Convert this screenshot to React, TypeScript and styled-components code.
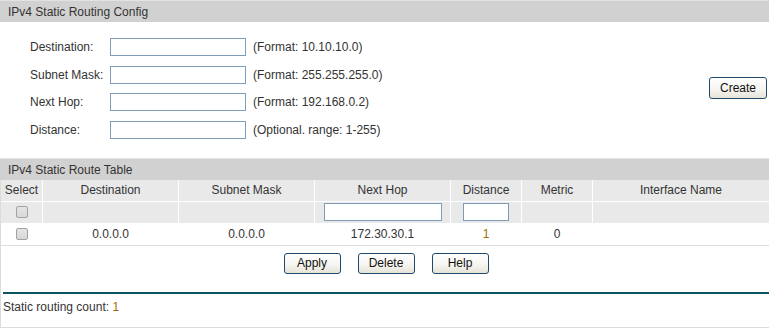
import styled, { createGlobalStyle } from "styled-components";

const GlobalStyle = createGlobalStyle`
  body {
    margin: 0;
    background: #fff;
    font-family: "Liberation Sans", Arial, sans-serif;
    font-size: 12px;
    color: #333;
  }
`;

const fields = [
  { label: "Destination:", hint: "(Format: 10.10.10.0)" },
  { label: "Subnet Mask:", hint: "(Format: 255.255.255.0)" },
  { label: "Next Hop:", hint: "(Format: 192.168.0.2)" },
  { label: "Distance:", hint: "(Optional. range: 1-255)" },
];

const columns = [
  "Select",
  "Destination",
  "Subnet Mask",
  "Next Hop",
  "Distance",
  "Metric",
  "Interface Name",
];

const routes = [
  {
    destination: "0.0.0.0",
    mask: "0.0.0.0",
    nextHop: "172.30.30.1",
    distance: "1",
    metric: "0",
    iface: "",
  },
];

const App = () => {
  return (
    <Page>
      <GlobalStyle />
      <SectionTitle>IPv4 Static Routing Config</SectionTitle>
      <ConfigBody>
        <FormGrid>
          {fields.map((f) => (
            <FormRow key={f.label}>
              <Label>{f.label}</Label>
              <TextInput type="text" $width={136} />
              <Hint>{f.hint}</Hint>
            </FormRow>
          ))}
        </FormGrid>
        <Button $width={58} $height={22}>
          Create
        </Button>
      </ConfigBody>

      <SectionTitle>IPv4 Static Route Table</SectionTitle>
      <TableBody>
        <Row $shade>
          {columns.map((c) => (
            <HeadCell key={c}>{c}</HeadCell>
          ))}
        </Row>
        <Row $shade>
          <Cell>
            <Check type="checkbox" />
          </Cell>
          <Cell />
          <Cell />
          <Cell>
            <TextInput type="text" $width={118} />
          </Cell>
          <Cell>
            <TextInput type="text" $width={46} />
          </Cell>
          <Cell />
          <Cell />
        </Row>
        {routes.map((r) => (
          <Row key={r.destination + r.nextHop} $line>
            <Cell>
              <Check type="checkbox" />
            </Cell>
            <Cell>{r.destination}</Cell>
            <Cell>{r.mask}</Cell>
            <Cell>{r.nextHop}</Cell>
            <Cell $accent>{r.distance}</Cell>
            <Cell>{r.metric}</Cell>
            <Cell>{r.iface}</Cell>
          </Row>
        ))}

        <ActionBar>
          <Button $width={57} $height={21}>Apply</Button>
          <Button $width={57} $height={21}>Delete</Button>
          <Button $width={57} $height={21}>Help</Button>
        </ActionBar>
        <Divider />
        <CountLine>
          Static routing count: <Accent>1</Accent>
        </CountLine>
      </TableBody>
    </Page>
  );
};

const Page = styled.div`
  width: 769px;
  height: 328px;
  box-sizing: border-box;
  display: flex;
  flex-direction: column;
`;

const SectionTitle = styled.div`
  height: 21px;
  line-height: 22px;
  border-top: 1px solid #e2e2e2;
  background: #d1d1d1;
  padding-left: 8px;
  color: #333;
`;

const ConfigBody = styled.div`
  display: flex;
  align-items: center;
  justify-content: space-between;
  padding: 16px 2px 19px 30px;
`;

const FormGrid = styled.div`
  display: flex;
  flex-direction: column;
  gap: 9.5px;
`;

const FormRow = styled.div`
  display: grid;
  grid-template-columns: 80px 136px auto;
  align-items: center;
  height: 18px;
`;

const Label = styled.span`
  color: #333;
`;

const Hint = styled.span`
  padding-left: 7px;
  color: #333;
`;

const TextInput = styled.input<{ $width: number }>`
  box-sizing: border-box;
  width: ${({ $width }) => $width}px;
  height: 18px;
  margin: 0;
  padding: 0 3px;
  border: 1px solid #7f9db9;
  background: #fff;
  font-family: inherit;
  font-size: 12px;
`;

const Button = styled.button<{ $width: number; $height: number }>`
  box-sizing: border-box;
  width: ${({ $width }) => $width}px;
  height: ${({ $height }) => $height}px;
  padding: 0;
  border: 1px solid #1f4a6e;
  border-radius: 3px;
  background: linear-gradient(#ffffff 0%, #f6f5f1 55%, #e6e3d8 100%);
  font-family: "Liberation Sans", Arial, sans-serif;
  font-size: 12px;
  color: #111;
  cursor: pointer;
`;

const TableBody = styled.div`
  flex: 1;
  display: flex;
  flex-direction: column;
  border-left: 1px solid #dcdcdc;
  border-bottom: 1px solid #dcdcdc;
`;

const Row = styled.div<{ $shade?: boolean; $line?: boolean }>`
  display: grid;
  grid-template-columns: 41px 135px 135px 135px 70px 70px 1fr;
  column-gap: 1px;
  height: 21px;
  background: #fff;
  border-bottom: 1px solid ${({ $line }) => ($line ? "#dedede" : "#fff")};

  & > div {
    background: ${({ $shade }) => ($shade ? "#e9e9e9" : "#fff")};
  }
`;

const Cell = styled.div<{ $accent?: boolean }>`
  display: flex;
  align-items: center;
  justify-content: center;
  color: ${({ $accent }) => ($accent ? "#a26c06" : "#333")};
`;

const HeadCell = styled(Cell)`
  color: #333;
`;

const Check = styled.input`
  appearance: none;
  box-sizing: border-box;
  width: 12px;
  height: 12px;
  margin: 0;
  border: 1px solid #a3a3a3;
  border-radius: 2px;
  background: linear-gradient(#e4e4e4, #d8d8d8);
`;

const ActionBar = styled.div`
  display: flex;
  justify-content: center;
  gap: 17px;
  padding: 7px 0 18px;
  margin-left: 2px;
`;

const Divider = styled.div`
  height: 2px;
  margin: 0 0 0 2px;
  background: #0b5563;
`;

const CountLine = styled.div`
  padding: 6px 0 0 2px;
  line-height: 14px;
  color: #333;
`;

const Accent = styled.span`
  color: #a26c06;
`;

export default App;
